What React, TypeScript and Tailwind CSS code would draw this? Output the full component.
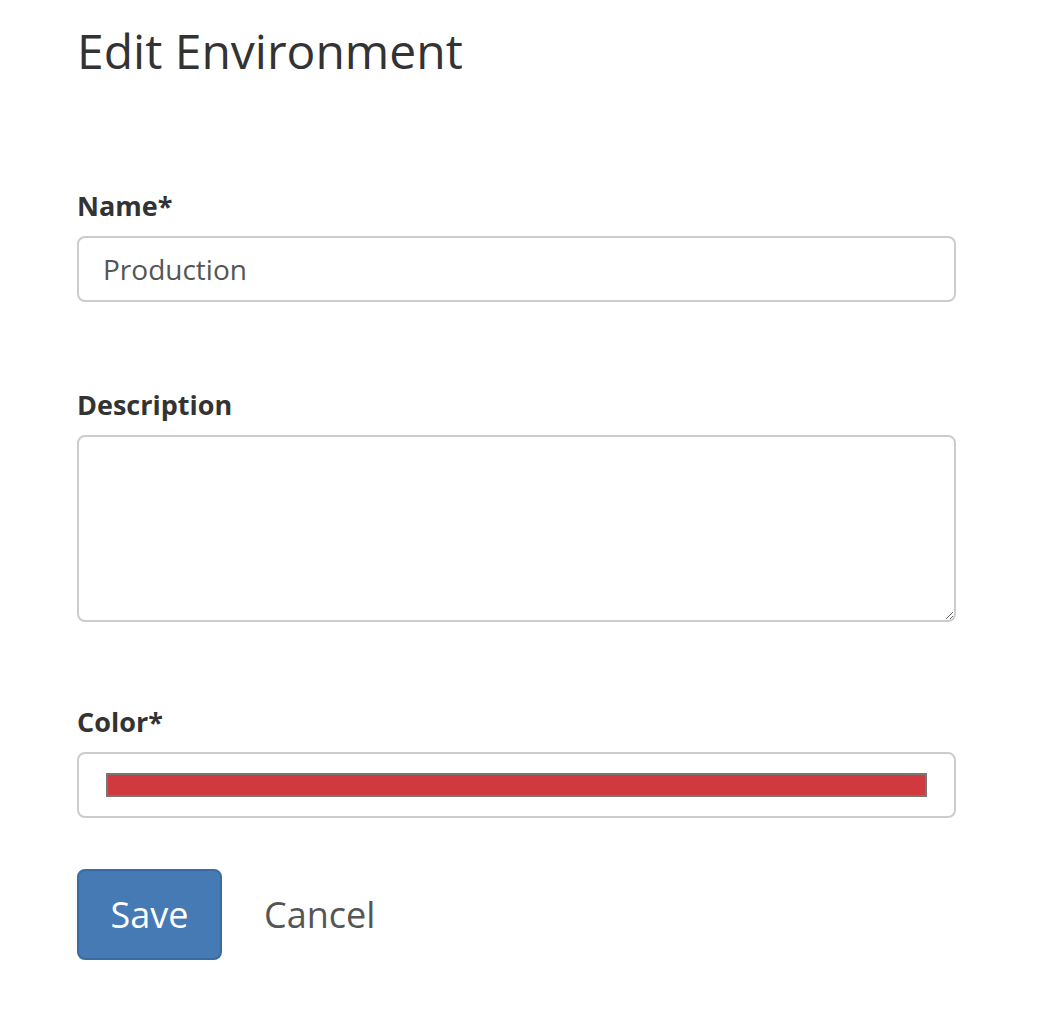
export default function App() {
  return (
    <div className="min-h-screen bg-white font-['Open_Sans',sans-serif] text-[#333]">
      <div className="pl-[77px] pr-[98px] pt-[16px]">
        <h1 className="text-[48px] leading-[70px] font-normal">Edit Environment</h1>

        <form className="mt-[102px] flex flex-col">
          <label className="text-[27px] font-bold leading-[36px]">Name*</label>
          <input
            defaultValue="Production"
            className="mt-[12px] h-[66px] w-full rounded-[8px] border-2 border-[#cccccc] px-[24px] text-[28px] text-[#555] outline-none"
          />

          <label className="mt-[85px] text-[27px] font-bold leading-[36px]">Description</label>
          <textarea
            className="mt-[12px] h-[187px] w-full rounded-[8px] border-2 border-[#cccccc] px-[24px] py-[12px] text-[28px] text-[#555] outline-none"
          />

          <label className="mt-[82px] text-[27px] font-bold leading-[36px]">Color*</label>
          <div className="mt-[12px] flex h-[66px] w-full items-center rounded-[8px] border-2 border-[#cccccc] px-[27px]">
            <div className="h-[24px] w-full border-2 border-[#777] bg-[#d0393e]" />
          </div>

          <div className="mt-[51px] flex items-center gap-[42px]">
            <button
              type="button"
              className="h-[91px] w-[145px] rounded-[8px] border-2 border-[#3a6ca3] bg-[#457ab5] text-[36px] text-white"
            >
              Save
            </button>
            <span className="text-[36px] text-[#555]">Cancel</span>
          </div>
        </form>
      </div>
    </div>
  );
}
